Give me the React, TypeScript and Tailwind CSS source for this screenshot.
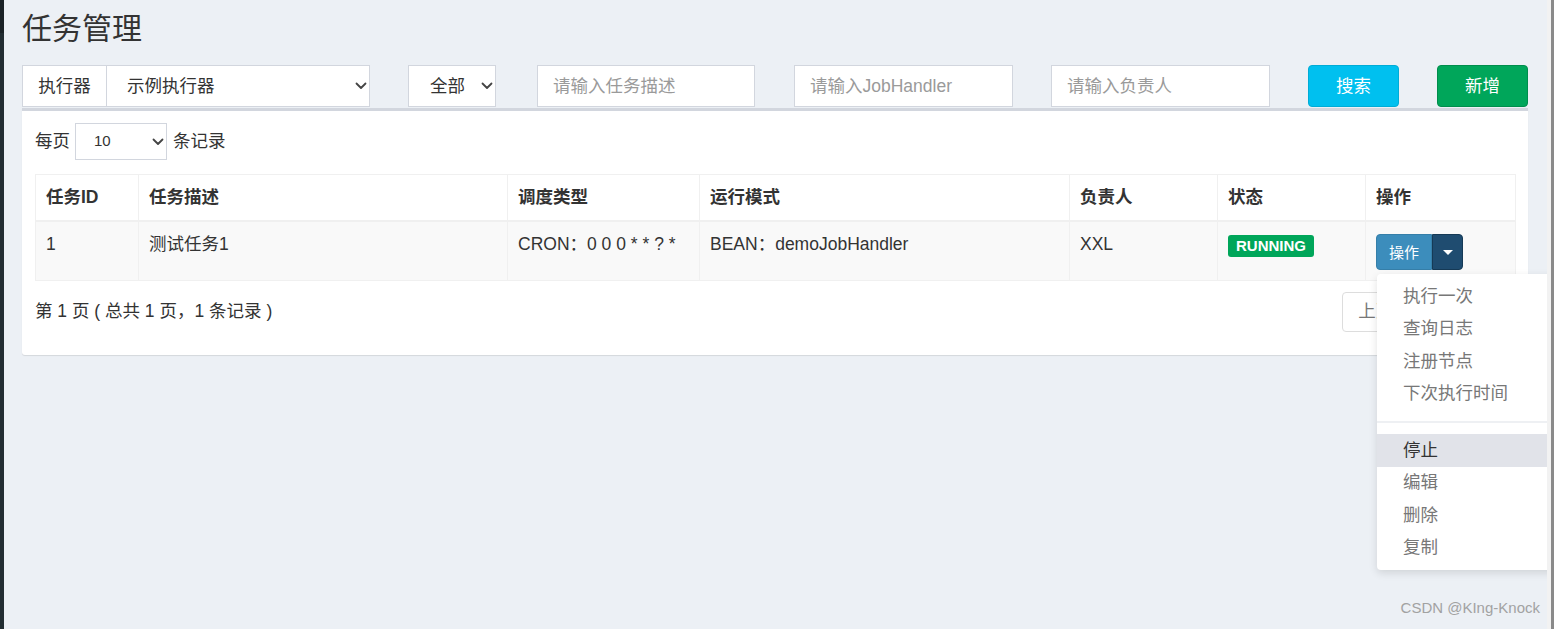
import React from "react";

const font = "font-['Liberation_Sans','Noto_Sans_CJK_SC',sans-serif]";

function Chevron({ className = "" }: { className?: string }) {
  return (
    <svg viewBox="0 0 12 8" className={`h-[8px] w-[12px] ${className}`} aria-hidden>
      <path d="M1.5 1.5 L6 6 L10.5 1.5" fill="none" stroke="#444" strokeWidth="1.8" strokeLinecap="round" strokeLinejoin="round" />
    </svg>
  );
}

const columns = [
  { title: "任务ID", width: 103 },
  { title: "任务描述", width: 369 },
  { title: "调度类型", width: 192 },
  { title: "运行模式", width: 370 },
  { title: "负责人", width: 148 },
  { title: "状态", width: 148 },
  { title: "操作", width: 150 },
];

const menuTop = ["执行一次", "查询日志", "注册节点", "下次执行时间"];
const menuBottom = ["停止", "编辑", "删除", "复制"];

function ActionMenu() {
  return (
    <div className="relative inline-block">
      <div className="flex h-[36px]">
        <button className="flex w-[56px] items-center justify-center rounded-l-[4px] border border-[#367fa9] bg-[#3c8dbc] text-[15px] text-white">
          操作
        </button>
        <button className="flex w-[31px] items-center justify-center rounded-r-[4px] border border-[#163a56] bg-[#1f4c70]">
          <span className="h-0 w-0 border-x-[5px] border-t-[5px] border-x-transparent border-t-white" />
        </button>
      </div>
      <div className="absolute left-[1px] top-[40px] z-10 w-[200px] rounded-[4px] bg-white py-[6px] text-[17.5px] leading-[25px] text-[#777] shadow-[0_3px_8px_rgba(0,0,0,0.12)]">
        {menuTop.map((m) => (
          <div key={m} className="py-[3.75px] pl-[26px]">
            {m}
          </div>
        ))}
        <div className="my-[11px] h-[2px] bg-[#eef0f3]" />
        {menuBottom.map((m, i) => (
          <div key={m} className={`py-[3.75px] pl-[26px] ${i === 0 ? "bg-[#e1e3e9] text-[#333]" : ""}`}>
            {m}
          </div>
        ))}
      </div>
    </div>
  );
}

export default function App() {
  return (
    <div className={`flex h-[629px] w-[1555px] overflow-hidden bg-[#ecf0f5] text-[#333] ${font}`}>
      <div className="flex w-[4px] flex-col bg-[#222d32]">
        <div className="h-[33px] bg-[#1a2226]" />
      </div>

      <div className="relative min-w-0 flex-1 overflow-hidden pl-[18px] pr-[19px]">
        <h1 className="pt-[12px] text-[30px] leading-[34px] font-normal">任务管理</h1>

        <div className="mt-[19px] flex h-[42px] items-stretch text-[17.5px]">
          <div className="flex w-[348px] bg-white">
            <div className="flex w-[85px] items-center justify-center border border-[#d2d6de]">执行器</div>
            <div className="flex flex-1 items-center justify-between border border-l-0 border-[#d2d6de] pl-[20px] pr-[2px]">
              <span>示例执行器</span>
              <Chevron />
            </div>
          </div>
          <div className="ml-[38px] flex w-[88px] items-center justify-between border border-[#d2d6de] bg-white pl-[21px] pr-[2px]">
            <span>全部</span>
            <Chevron />
          </div>
          <div className="ml-[41px] flex w-[218px] items-center border border-[#d2d6de] bg-white pl-[15px] text-[#9a9a9a]">
            请输入任务描述
          </div>
          <div className="ml-[39px] flex w-[219px] items-center border border-[#d2d6de] bg-white pl-[15px] text-[#9a9a9a]">
            请输入JobHandler
          </div>
          <div className="ml-[38px] flex w-[219px] items-center border border-[#d2d6de] bg-white pl-[15px] text-[#9a9a9a]">
            请输入负责人
          </div>
          <button className="ml-[38px] w-[91px] rounded-[4px] border border-[#00acd6] bg-[#00c0ef] text-white">搜索</button>
          <button className="ml-[38px] w-[91px] rounded-[4px] border border-[#008d4c] bg-[#00a65a] text-white">新增</button>
        </div>

        <div className="mt-[1px] w-[1506px] rounded-b-[3px] border-t-[3px] border-[#d2d6de] bg-white px-[13px] pb-[23px] pt-[12px] shadow-[0_1px_1px_rgba(0,0,0,0.1)] text-[17.5px]">
          <div className="flex items-center">
            <span>每页</span>
            <div className="ml-[5px] flex h-[37px] w-[92px] items-center justify-between border border-[#d2d6de] pl-[18px] pr-[2px] text-[15px]">
              <span>10</span>
              <Chevron />
            </div>
            <span className="ml-[6px]">条记录</span>
          </div>

          <table className="mt-[14px] w-[1480px] table-fixed border-collapse">
            <colgroup>
              {columns.map((c) => (
                <col key={c.title} style={{ width: c.width }} />
              ))}
            </colgroup>
            <thead>
              <tr>
                {columns.map((c) => (
                  <th
                    key={c.title}
                    className="border border-b-2 border-[#f0f0f0] px-[10px] py-[10px] text-left align-top leading-[25px] font-bold"
                  >
                    {c.title}
                  </th>
                ))}
              </tr>
            </thead>
            <tbody>
              <tr className="bg-[#f9f9f9] leading-[25px]">
                <td className="h-[59px] border border-[#f0f0f0] px-[10px] py-[10px] align-top">1</td>
                <td className="border border-[#f0f0f0] px-[10px] py-[10px] align-top">测试任务1</td>
                <td className="border border-[#f0f0f0] px-[10px] py-[10px] align-top">CRON：0 0 0 * * ? *</td>
                <td className="border border-[#f0f0f0] px-[10px] py-[10px] align-top">BEAN：demoJobHandler</td>
                <td className="border border-[#f0f0f0] px-[10px] py-[10px] align-top">XXL</td>
                <td className="border border-[#f0f0f0] px-[10px] pt-[11px] align-top">
                  <span className="inline-block rounded-[3px] bg-[#00a65a] px-[8px] text-[15px] leading-[22px] font-bold text-white">
                    RUNNING
                  </span>
                </td>
                <td className="border border-[#f0f0f0] px-[10px] pt-[12px] align-top">
                  <ActionMenu />
                </td>
              </tr>
            </tbody>
          </table>

          <div className="mt-[11px] flex items-center justify-between">
            <span>第 1 页 ( 总共 1 页，1 条记录 )</span>
            <div className="flex h-[40px] text-[17.5px] text-[#777]">
              <span className="flex items-center rounded-l-[4px] border border-[#ddd] px-[15px]">上页</span>
              <span className="flex items-center border border-l-0 border-[#ddd] px-[15px]">1</span>
              <span className="flex items-center rounded-r-[4px] border border-l-0 border-[#ddd] pl-[15px] pr-[14px]">下页</span>
            </div>
          </div>
        </div>

        <div className="absolute bottom-[10px] right-[7px] text-[15px] text-[#a2a2a2] font-['Liberation_Sans',sans-serif]">
          CSDN @KIng-Knock
        </div>
      </div>

      <div className="flex w-[8px]">
        <div className="w-[4px] bg-[#f2f2f2]" />
        <div className="w-[3px] bg-[#8a8a8a]" />
        <div className="w-[1px] bg-white" />
      </div>
    </div>
  );
}
